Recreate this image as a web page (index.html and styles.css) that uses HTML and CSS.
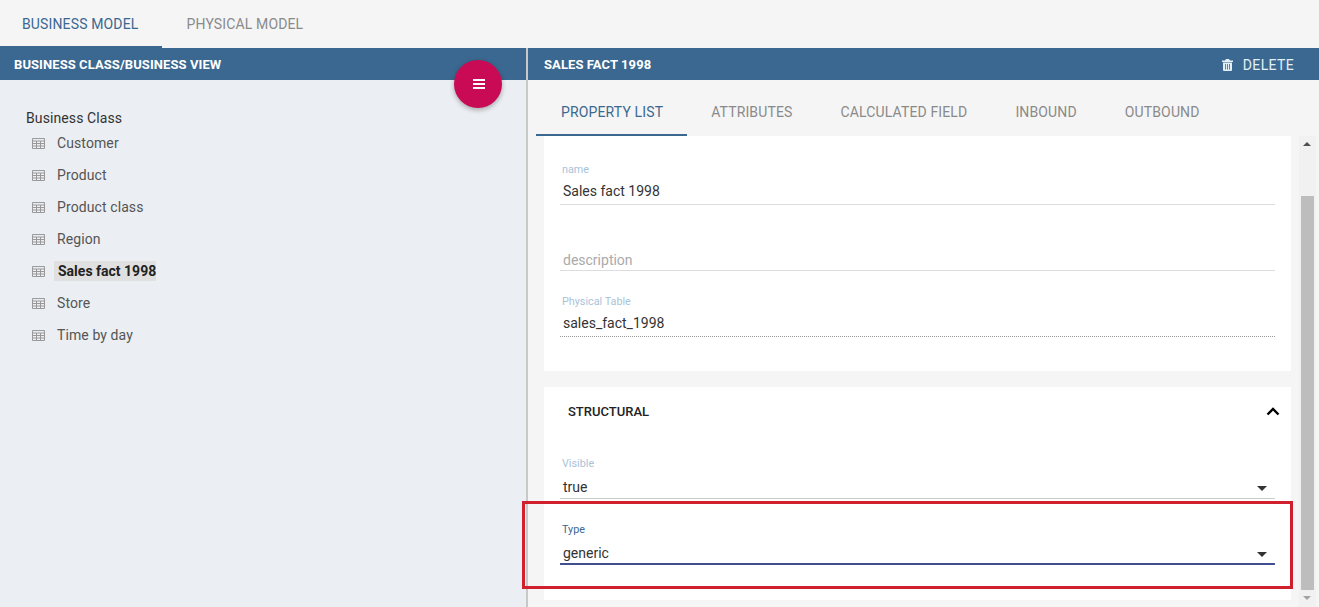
FILE: index.html
```html
<!DOCTYPE html>
<html lang="en">
<head>
    <meta charset="UTF-8">
    <meta name="viewport" content="width=device-width, initial-scale=1.0">
    <title>Business model</title>
    <link rel="stylesheet" href="styles.css">
</head>
<body>
    <div class="top-tabs">
        <div class="top-tab active">Business Model</div>
        <div class="top-tab">Physical Model</div>
    </div>

    <div class="main">
        <div class="left-panel">
            <div class="panel-header">
                <span class="panel-title">Business Class/Business View</span>
            </div>
            <button class="fab">
                <svg width="12" height="10" viewBox="0 0 12 10"><path d="M0 0h12v2H0zM0 4h12v2H0zM0 8h12v2H0z" fill="#fff"/></svg>
            </button>
            <div class="tree">
                <div class="tree-title">Business Class</div>
                <div class="tree-item"><svg class="table-icon" viewBox="0 0 13 11"><use href="#table"/></svg><span>Customer</span></div>
                <div class="tree-item"><svg class="table-icon" viewBox="0 0 13 11"><use href="#table"/></svg><span>Product</span></div>
                <div class="tree-item"><svg class="table-icon" viewBox="0 0 13 11"><use href="#table"/></svg><span>Product class</span></div>
                <div class="tree-item"><svg class="table-icon" viewBox="0 0 13 11"><use href="#table"/></svg><span>Region</span></div>
                <div class="tree-item selected"><svg class="table-icon" viewBox="0 0 13 11"><use href="#table"/></svg><span>Sales fact 1998</span></div>
                <div class="tree-item"><svg class="table-icon" viewBox="0 0 13 11"><use href="#table"/></svg><span>Store</span></div>
                <div class="tree-item"><svg class="table-icon" viewBox="0 0 13 11"><use href="#table"/></svg><span>Time by day</span></div>
            </div>
        </div>

        <div class="right-panel">
            <div class="panel-header right">
                <span class="panel-title">Sales fact 1998</span>
                <div class="delete-btn">
                    <svg width="11" height="12" viewBox="0 0 11 12"><path d="M4 0h3l1 1.5h3V3H0V1.5h3zM1 3.6h9V11a1 1 0 0 1-1 1H2a1 1 0 0 1-1-1zM3 5v5.5h.8V5zM5.1 5v5.5h.8V5zM7.2 5v5.5H8V5z" fill="#e3f0f8" fill-rule="evenodd"/></svg>
                    <span>Delete</span>
                </div>
            </div>
            <div class="sub-tabs">
                <div class="sub-tab active">Property List</div>
                <div class="sub-tab">Attributes</div>
                <div class="sub-tab">Calculated Field</div>
                <div class="sub-tab">Inbound</div>
                <div class="sub-tab">Outbound</div>
            </div>
            <div class="content">
                <div class="cards">
                    <div class="card first">
                        <div class="field">
                            <label>name</label>
                            <div class="value">Sales fact 1998</div>
                        </div>
                        <div class="field">
                            <div class="value placeholder">description</div>
                        </div>
                        <div class="field">
                            <label>Physical Table</label>
                            <div class="value dotted">sales_fact_1998</div>
                        </div>
                    </div>
                    <div class="card second">
                        <div class="card-header">
                            <span>Structural</span>
                            <svg width="14" height="9" viewBox="0 0 14 9"><path d="M1.5 7.5 7 2l5.5 5.5" fill="none" stroke="#000" stroke-width="2.4"/></svg>
                        </div>
                        <div class="field">
                            <label>Visible</label>
                            <div class="value select">true<i class="caret"></i></div>
                        </div>
                        <div class="field focused">
                            <label>Type</label>
                            <div class="value select">generic<i class="caret"></i></div>
                        </div>
                    </div>
                </div>
                <div class="scrollbar">
                    <i class="arrow-up"></i>
                    <div class="thumb"></div>
                    <i class="arrow-down"></i>
                </div>
            </div>
        </div>
    </div>

    <div class="highlight"></div>

    <svg width="0" height="0" class="defs">
        <symbol id="table" viewBox="0 0 13 11">
            <path d="M.5.5h12v10H.5zM.5 3h12M.5 5.5h12M.5 8h12M4.5 3v7.5M8.5 3v7.5" fill="none" stroke="#999"/>
        </symbol>
    </svg>
</body>
</html>
```

FILE: styles.css
```css
* {
    box-sizing: border-box;
}
body {
    font-family: Roboto, "Liberation Sans", sans-serif;
    margin: 0;
    height: 607px;
    overflow: hidden;
    background-color: #f5f5f5;
    color: #333;
    font-size: 14px;
    position: relative;
}
.defs {
    position: absolute;
}
.top-tabs {
    display: flex;
    height: 48px;
}
.top-tab {
    padding: 0 24px;
    line-height: 49px;
    letter-spacing: 0.14px;
    text-transform: uppercase;
    color: #8a8a8a;
}
.top-tab.active {
    padding: 0 24px 0 22px;
    color: #3b6890;
    border-bottom: 2px solid #3b6890;
}
.main {
    display: flex;
    height: 559px;
}
.left-panel {
    position: relative;
    width: 528px;
    background-color: #ebeef2;
    border-right: 2px solid #c8c8c8;
}
.panel-header {
    height: 32px;
    background-color: #3b6890;
    color: #fff;
    padding-left: 14px;
    display: flex;
    align-items: center;
    justify-content: space-between;
}
.panel-header.right {
    padding: 0 25px 0 16px;
}
.panel-title {
    font-size: 13px;
    font-weight: 700;
    letter-spacing: 0.08px;
    text-transform: uppercase;
}
.fab {
    position: absolute;
    left: 454px;
    top: 12px;
    width: 48px;
    height: 48px;
    border: none;
    border-radius: 50%;
    background-color: #c90a55;
    box-shadow: 0 2px 5px rgba(0, 0, 0, 0.3);
    display: flex;
    align-items: center;
    justify-content: center;
    padding: 0 0 0 2px;
}
.tree {
    padding: 29px 0 0 26px;
}
.tree-title {
    line-height: 18px;
    letter-spacing: 0.1px;
    color: #333;
}
.tree-item {
    display: flex;
    align-items: center;
    height: 32px;
    padding-left: 6px;
    color: #555;
}
.tree-item span {
    margin-left: 9px;
    padding: 0 1px 0 3px;
    line-height: 20px;
    letter-spacing: 0.1px;
}
.tree-item.selected span {
    padding: 0 0 0 4px;
    background-color: #e0e0e0;
    color: #222;
    font-weight: 700;
    letter-spacing: 0;
}
.table-icon {
    width: 13px;
    height: 11px;
}
.right-panel {
    flex: 1;
    display: flex;
    flex-direction: column;
}
.delete-btn {
    display: flex;
    align-items: center;
    gap: 10px;
    padding-top: 1px;
    color: #e3f0f8;
    letter-spacing: 0.35px;
    text-transform: uppercase;
}
.sub-tabs {
    display: flex;
    height: 56px;
    padding-left: 8px;
}
.sub-tab {
    padding: 0 24px;
    line-height: 64px;
    letter-spacing: 0.14px;
    text-transform: uppercase;
    color: #8a8a8a;
}
.sub-tab.active {
    padding-left: 25px;
    color: #3b6890;
    border-bottom: 2px solid #3b6890;
}
.content {
    flex: 1;
    display: flex;
    padding-left: 16px;
}
.cards {
    width: 747px;
}
.card {
    background-color: #fff;
    padding: 0 16px;
}
.card.first {
    height: 235px;
    padding-top: 3px;
    margin-bottom: 16px;
}
.card.second {
    height: 213px;
}
.card-header {
    height: 46px;
    margin-right: -5px;
    padding: 2px 0 0 8px;
    display: flex;
    align-items: center;
    justify-content: space-between;
    font-size: 13px;
    font-weight: 500;
    text-transform: uppercase;
    color: #222;
}
.field {
    height: 66px;
    display: flex;
    flex-direction: column;
    justify-content: flex-end;
}
.field label {
    font-size: 10.8px;
    line-height: 12px;
    margin: 0 0 2px 2px;
    color: #a9c2d8;
}
.field.focused label {
    color: #3b6890;
}
.value {
    position: relative;
    height: 27px;
    line-height: 26px;
    padding-left: 3px;
    border-bottom: 1px solid #ddd;
    color: #333;
}
.value.placeholder {
    padding-top: 6px;
    line-height: 20px;
    color: #aaa;
}
.value.dotted {
    border-bottom: 1px dotted #999;
}
.value.select {
    line-height: 30px;
    border-bottom-color: #ccc;
}
.field.focused .value {
    border-bottom: 2px solid #3f4f8f;
}
.caret {
    position: absolute;
    right: 8px;
    top: 14px;
    border-left: 5px solid transparent;
    border-right: 5px solid transparent;
    border-top: 5px solid #333;
}
.scrollbar {
    position: relative;
    width: 17px;
    margin-left: 8px;
    background-color: #f1f1f1;
}
.thumb {
    position: absolute;
    left: 2px;
    top: 60px;
    width: 13px;
    height: 394px;
    background-color: #bdbdbd;
}
.arrow-up, .arrow-down {
    position: absolute;
    left: 4px;
    border-left: 4px solid transparent;
    border-right: 4px solid transparent;
}
.arrow-up {
    top: 6px;
    border-bottom: 4px solid #505050;
}
.arrow-down {
    bottom: 7px;
    border-top: 4px solid #a3a3a3;
}
.highlight {
    position: absolute;
    left: 522px;
    top: 501px;
    width: 771px;
    height: 88px;
    border: 3px solid #d0202e;
}
```
